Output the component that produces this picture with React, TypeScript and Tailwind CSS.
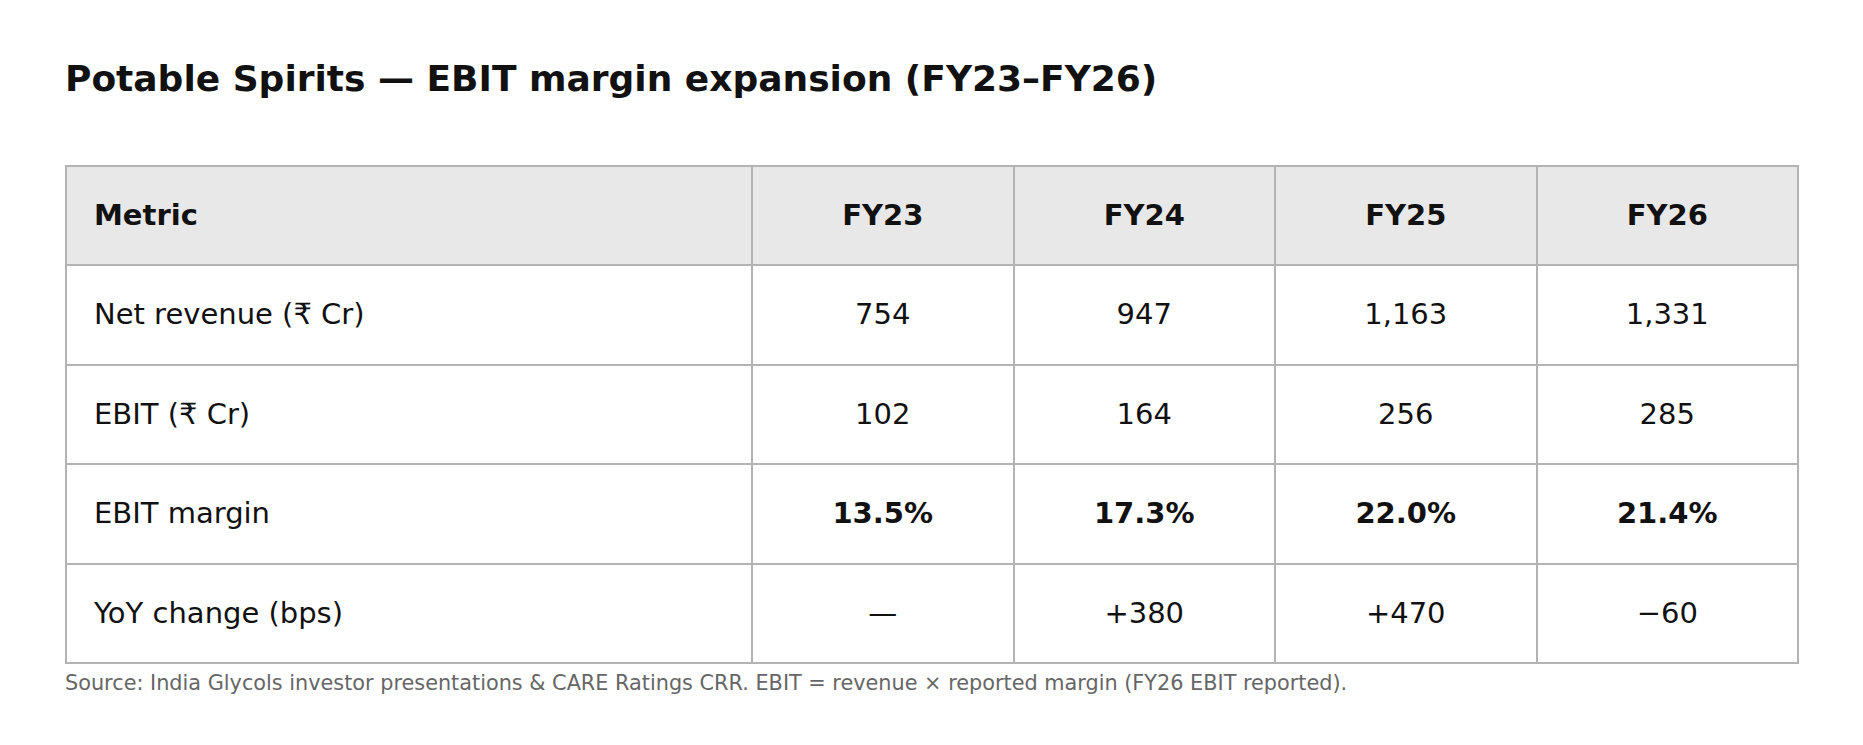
import React from "react";

const years = ["FY23", "FY24", "FY25", "FY26"];

const rows: { label: string; values: string[]; bold?: boolean }[] = [
  { label: "Net revenue (₹ Cr)", values: ["754", "947", "1,163", "1,331"] },
  { label: "EBIT (₹ Cr)", values: ["102", "164", "256", "285"] },
  { label: "EBIT margin", values: ["13.5%", "17.3%", "22.0%", "21.4%"], bold: true },
  { label: "YoY change (bps)", values: ["—", "+380", "+470", "−60"] },
];

export default function App() {
  return (
    <div
      className="min-h-screen bg-white pl-[65px] pt-[57px] text-[#111111]"
      style={{ fontFamily: '"DejaVu Sans", "Noto Sans", sans-serif' }}
    >
      <h1 className="text-[36px] font-bold leading-[44px]">
        Potable Spirits — EBIT margin expansion (FY23–FY26)
      </h1>

      <table className="mt-[64px] w-[1732px] table-fixed border-collapse border-2 border-[#b3b3b3] text-[29px]">
        <colgroup>
          <col className="w-[686px]" />
          <col className="w-[261.5px]" />
          <col className="w-[261.5px]" />
          <col className="w-[261.5px]" />
          <col className="w-[261.5px]" />
        </colgroup>
        <thead>
          <tr className="h-[99.4px] bg-[#e8e8e8]">
            <th className="border-2 border-[#b3b3b3] px-[27px] text-left font-bold">Metric</th>
            {years.map((y) => (
              <th key={y} className="border-2 border-[#b3b3b3] text-center font-bold">
                {y}
              </th>
            ))}
          </tr>
        </thead>
        <tbody>
          {rows.map((r) => (
            <tr key={r.label} className="h-[99.4px]">
              <td className="border-2 border-[#b3b3b3] px-[27px] text-left">{r.label}</td>
              {r.values.map((v, i) => (
                <td
                  key={i}
                  className={`border-2 border-[#b3b3b3] text-center ${r.bold ? "font-bold" : "font-normal"}`}
                >
                  {v}
                </td>
              ))}
            </tr>
          ))}
        </tbody>
      </table>

      <p className="mt-[7px] text-[20.8px] leading-[25px] text-[#666666]">
        Source: India Glycols investor presentations &amp; CARE Ratings CRR. EBIT = revenue × reported margin (FY26 EBIT
        reported).
      </p>
    </div>
  );
}
